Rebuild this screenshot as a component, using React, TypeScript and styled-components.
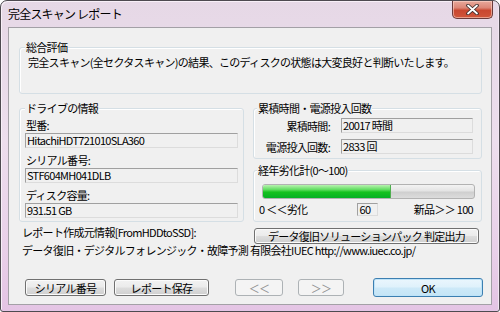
import styled, { createGlobalStyle } from 'styled-components'

const GlobalStyle = createGlobalStyle`
  html, body {
    margin: 0;
    padding: 0;
    background: #ffffff;
  }
  body {
    font-family: 'Noto Sans CJK JP', 'Noto Sans', sans-serif;
    font-size: 11px;
    letter-spacing: -0.7px;
    color: #000;
  }
`

const report = {
  model: 'HitachiHDT721010SLA360',
  serial: 'STF604MH041DLB',
  capacity: '931.51 GB',
  hours: '20017 時間',
  powerOn: '2833 回',
  health: 60,
}

function App() {
  return (
    <>
      <GlobalStyle />
      <Window>
        <TitleBar>
          <Title>完全スキャン レポート</Title>
          <CloseButton aria-label="閉じる">
            <svg width="13" height="11" viewBox="0 0 13 11">
              <path d="M2 1.5 L11 9.5 M11 1.5 L2 9.5" stroke="#3a2a2a" strokeWidth="3.6" strokeLinecap="round" />
              <path d="M2 1.5 L11 9.5 M11 1.5 L2 9.5" stroke="#ffffff" strokeWidth="1.8" strokeLinecap="round" />
            </svg>
          </CloseButton>
        </TitleBar>

        <Client>
          <Group $height={47} $pad="7px 8px 0">
            <Caption>総合評価</Caption>
            完全スキャン(全セクタスキャン)の結果、このディスクの状態は大変良好と判断いたします。
          </Group>

          <MiddleRow>
            <Group $width={225} $height={114} $pad="9px 5px 0">
              <Caption>ドライブの情報</Caption>
              <FieldLabel>型番:</FieldLabel>
              <Field>{report.model}</Field>
              <FieldLabel>シリアル番号:</FieldLabel>
              <Field>{report.serial}</Field>
              <FieldLabel>ディスク容量:</FieldLabel>
              <Field>{report.capacity}</Field>
            </Group>

            <RightColumn>
              <Group $height={51} $pad="9px 8px 0 6px" $captionLeft={3}>
                <Caption>累積時間・電源投入回数</Caption>
                <CounterGrid>
                  <CounterLabel>累積時間:</CounterLabel>
                  <Field>{report.hours}</Field>
                  <CounterLabel>電源投入回数:</CounterLabel>
                  <Field>{report.powerOn}</Field>
                </CounterGrid>
              </Group>

              <Group $height={52} $pad="13px 6px 0 8px" $captionLeft={3}>
                <Caption>経年劣化計(0〜100)</Caption>
                <ProgressTrack>
                  <ProgressFill style={{ width: `${report.health}%` }} />
                </ProgressTrack>
                <ScaleRow>
                  <span>0 ＜＜劣化</span>
                  <ScaleValue>{report.health}</ScaleValue>
                  <ScaleEnd>新品＞＞ 100</ScaleEnd>
                </ScaleRow>
              </Group>
            </RightColumn>
          </MiddleRow>

          <SourceRow>
            <SourceText>レポート作成元情報[FromHDDtoSSD]:</SourceText>
            <WideButton>データ復旧ソリューションパック 判定出力</WideButton>
          </SourceRow>
          <CompanyLine>
            データ復旧・デジタルフォレンジック・故障予測 有限会社IUEC http://www.iuec.co.jp/
          </CompanyLine>

          <ButtonRow>
            <Button $width={81}>シリアル番号</Button>
            <Button $width={95}>レポート保存</Button>
            <NavGroup>
              <Button $width={48} disabled>
                ＜＜
              </Button>
              <Button $width={46} disabled>
                ＞＞
              </Button>
            </NavGroup>
            <OkButton>OK</OkButton>
          </ButtonRow>
        </Client>
      </Window>
    </>
  )
}

const Window = styled.div`
  width: 500px;
  height: 312px;
  box-sizing: border-box;
  display: flex;
  flex-direction: column;
  padding: 0 7px 6px;
  border: 1px solid #4e4a50;
  border-radius: 7px 7px 3px 3px;
  background: linear-gradient(180deg, #e6d8e6 0%, #eddeed 45%, #e9d0e9 80%, #e4c4e4 100%);
  box-shadow: inset 1px 1px 0 #f8f0f8, inset -1px 0 0 #f2e6f2;
`

const TitleBar = styled.div`
  height: 26px;
  display: flex;
  justify-content: space-between;
  align-items: flex-start;
`

const Title = styled.div`
  padding-top: 5px;
  font-size: 12px;
  line-height: 16px;
  letter-spacing: -0.8px;
`

const CloseButton = styled.div`
  width: 41px;
  height: 18px;
  margin-right: -1px;
  box-sizing: border-box;
  display: flex;
  align-items: center;
  justify-content: center;
  border: 1px solid #6b3b3b;
  border-top: none;
  border-radius: 0 0 5px 5px;
  background: linear-gradient(180deg, #e8a99c 0%, #dc8676 40%, #c9472f 55%, #d0553a 100%);
  box-shadow: inset 0 0 0 1px rgba(255, 220, 210, 0.55);
`

const Client = styled.div`
  flex: 1;
  display: flex;
  flex-direction: column;
  padding: 19px 9px 7px 10px;
  background: #f0f0f0;
  border: 1px solid #a3a0a6;
`

const Group = styled.div<{ $width?: number; $height: number; $pad: string; $captionLeft?: number }>`
  position: relative;
  box-sizing: border-box;
  ${({ $width }) => ($width ? `width: ${$width}px; flex: none;` : '')}
  height: ${({ $height }) => $height}px;
  padding: ${({ $pad }) => $pad};
  border: 1px solid #d5dfe5;
  border-radius: 3px;
  box-shadow: inset 1px 1px 0 #ffffff;
  line-height: 14px;

  > span:first-child {
    left: ${({ $captionLeft }) => $captionLeft ?? 5}px;
  }
`

const Caption = styled.span`
  position: absolute;
  top: -8px;
  padding: 0 1px;
  line-height: 14px;
  background: #f0f0f0;
`

const MiddleRow = styled.div`
  margin-top: 14px;
  display: flex;
  gap: 9px;
`

const RightColumn = styled.div`
  flex: 1;
  display: flex;
  flex-direction: column;
  gap: 11px;
`

const FieldLabel = styled.div`
  padding-left: 1px;
  line-height: 14px;

  div + & {
    margin-top: 5px;
  }
`

const Field = styled.div`
  height: 15px;
  margin-top: 1px;
  box-sizing: border-box;
  padding-left: 1px;
  border: 1px solid;
  border-color: #a0a0a0 #dcdcdc #dcdcdc #a0a0a0;
  background: #f0f0f0;
  line-height: 13px;
  white-space: nowrap;
  overflow: hidden;
`

const CounterGrid = styled.div`
  display: grid;
  grid-template-columns: 70px 1fr;
  column-gap: 11px;
  row-gap: 6px;
  align-items: center;

  > div {
    margin-top: 0;
  }
`

const CounterLabel = styled.span`
  text-align: right;
  white-space: nowrap;
`

const ProgressTrack = styled.div`
  height: 15px;
  box-sizing: border-box;
  border: 1px solid #b2b2b2;
  border-radius: 3px;
  background: linear-gradient(180deg, #f3f3f3 0%, #e4e4e4 45%, #cfcfcf 55%, #dcdcdc 100%);
  overflow: hidden;
`

const ProgressFill = styled.div`
  height: 100%;
  background: linear-gradient(180deg, #b8f2b0 0%, #62de62 35%, #14c21e 55%, #06b025 100%);
  border-right: 1px solid #4fae4f;
`

const ScaleRow = styled.div`
  margin: 4px 0 0 -3px;
  display: grid;
  grid-template-columns: 1fr auto 1fr;
  align-items: center;
  height: 13px;
  line-height: 13px;
`

const ScaleValue = styled.div`
  width: 21px;
  height: 13px;
  box-sizing: border-box;
  padding-left: 2px;
  border: 1px solid;
  border-color: #a0a0a0 #dcdcdc #dcdcdc #a0a0a0;
  line-height: 11px;
`

const ScaleEnd = styled.span`
  text-align: right;
  padding-right: 2px;
`

const SourceRow = styled.div`
  margin-top: 6px;
  height: 16px;
  display: flex;
  align-items: flex-start;
`

const SourceText = styled.div`
  flex: 1;
  padding-left: 3px;
  line-height: 14px;
  margin-top: -3px;
`

const CompanyLine = styled.div`
  padding-left: 3px;
  line-height: 12px;
  white-space: nowrap;
`

const Button = styled.button<{ $width: number }>`
  width: ${({ $width }) => $width}px;
  height: 17px;
  padding: 0;
  box-sizing: border-box;
  font: inherit;
  letter-spacing: inherit;
  line-height: 14px;
  color: #000;
  border: 1px solid #707070;
  border-radius: 3px;
  background: linear-gradient(180deg, #f2f2f2 0%, #ebebeb 48%, #dddddd 52%, #cfcfcf 100%);
  box-shadow: inset 0 0 0 1px #fbfbfb;

  &:disabled {
    color: #8e8f8f;
    border-color: #adb2b5;
    background: #f4f4f4;
    box-shadow: none;
  }
`

const WideButton = styled(Button).attrs({ $width: 225 })`
  height: 16px;
  margin-right: 3px;
`

const ButtonRow = styled.div`
  margin-top: auto;
  height: 19px;
  display: flex;
  align-items: center;
  padding-left: 6px;
  gap: 8px;
`

const NavGroup = styled.div`
  margin-left: 18px;
  display: flex;
  gap: 15px;
`

const OkButton = styled.button`
  margin-left: auto;
  margin-right: -1px;
  width: 110px;
  height: 19px;
  padding: 0;
  box-sizing: border-box;
  font: inherit;
  letter-spacing: inherit;
  color: #000;
  border: 1px solid #3c7fb1;
  border-radius: 3px;
  background: linear-gradient(180deg, #eaf6fd 0%, #dff1fb 48%, #cde9f8 52%, #c4e5f6 100%);
  box-shadow: inset 0 0 0 1px #bfe3f8;
`

export default App
